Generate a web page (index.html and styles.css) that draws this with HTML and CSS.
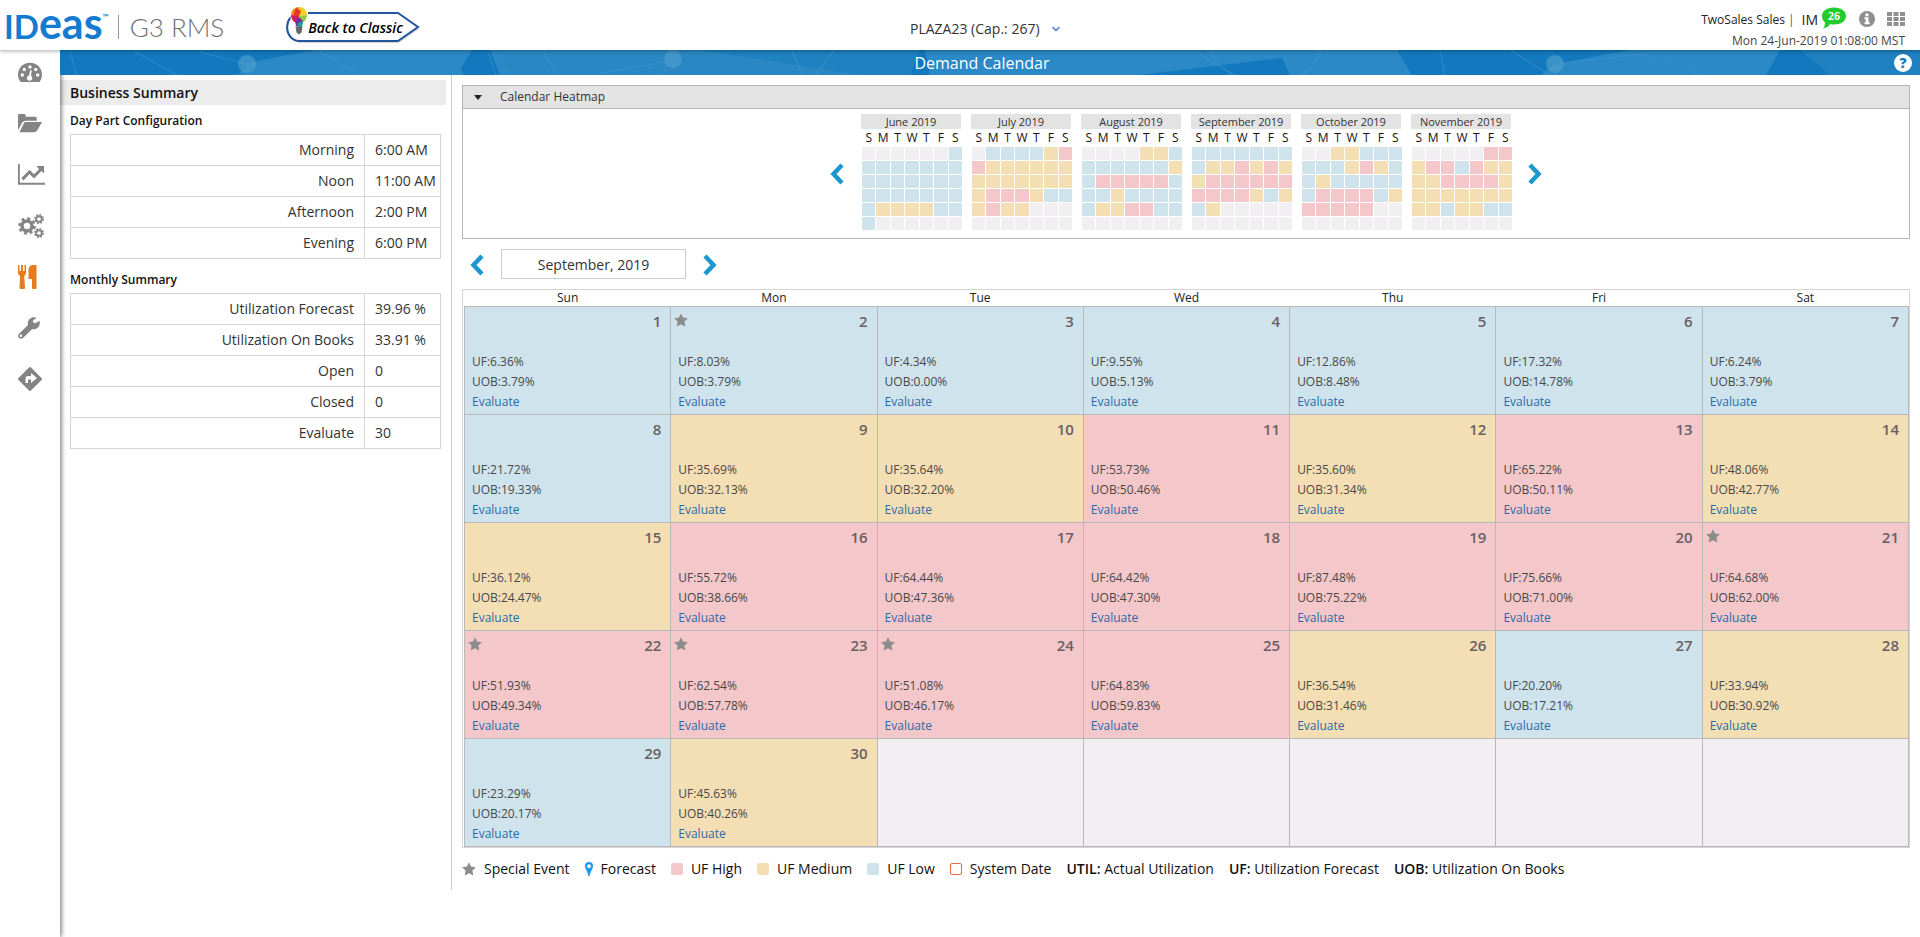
FILE: index.html
```html
<!DOCTYPE html>
<html lang="en">
<head>
<meta charset="utf-8">
<title>Demand Calendar</title>
<link rel="stylesheet" href="styles.css">
<script src="app.js" defer></script>
</head>
<body>
<svg class="defs" aria-hidden="true">
  <symbol id="star" viewBox="0 0 14 14"><path d="M7 .3 9 4.500l4.900.7-3.500 3.400.9 4.900L7 11.200l-4.300 2.300.9-4.900L.1 5.200 5 4.500z"/></symbol>
  <symbol id="prev" viewBox="0 0 14 22"><path d="M12 2 3.500 11 12 20" fill="none" stroke="currentColor" stroke-width="4.500"/></symbol>
  <symbol id="next" viewBox="0 0 14 22"><path d="M2 2 10.500 11 2 20" fill="none" stroke="currentColor" stroke-width="4.500"/></symbol>
</svg>
<header class="top">
  <div class="brand">
    <span class="logo">ID<span class="logo-e">eas</span><span class="tm">™</span></span>
    <span class="product">G3 RMS</span>
    <button class="classic" type="button">
      <svg class="classic-shape" viewBox="0 0 140 40" aria-hidden="true">
        <path d="M16 5h98l20 14-20 14H15C-1 32-1 6 16 5z" fill="#bbb" transform="translate(1 2)" opacity=".6"/>
        <path d="M16 5h98l20 14-20 14H15C-1 32-1 6 16 5z" fill="#fff" stroke="#23559b" stroke-width="2"/>
        <path d="M6 2h18v14l-6 14h-7L7 16z" fill="#fff"/>
        <path d="M15-1a8 8 0 0 0-8 8l8 1z" fill="#f28a1c"/><path d="M15-1a8 8 0 0 1 8 8l-8 1z" fill="#f2d21c"/>
        <path d="M7 7l8 1-2 7C9 14 7 11 7 7z" fill="#d81b60"/><path d="M23 7l-8 1 1 7c4 0 7-4 7-8z" fill="#9acb3c"/>
        <path d="M12 0l5 3-2 5-6 0z" fill="#e5342b"/><path d="M11 13l4-4 4 4-1 5h-6z" fill="#7b2b9b"/><path d="M14 15l5-2-1 6h-5z" fill="#17a398"/>
        <path d="M11.500 18.500h7l-1 6-2.500 2-2.500-2z" fill="#666"/>
      </svg>
      <span class="classic-text">Back to Classic</span>
    </button>
  </div>
  <div class="property">
    <select aria-label="Property"><option>PLAZA23 (Cap.: 267)</option></select>
    <svg width="8" height="6" viewBox="0 0 8 6" aria-hidden="true"><path d="M.5 1 4 4.500 7.500 1" fill="none" stroke="#3f74d1" stroke-width="1.300"/></svg>
  </div>
  <div class="account">
    <div class="user">
      <span>TwoSales Sales</span><span class="bar">|</span><span class="im">IM</span>
      <span class="bubble"><svg viewBox="0 0 26 22" aria-hidden="true"><path d="M13 .5c7 0 12 3.500 12 8.500s-5 8.500-12 8.500c-2 0-3 0-4-.4C8 19.500 5 21 2 21.500c1.500-1.500 2-4 2-6C2 14 1 11.500 1 9 1 4 6 .5 13 .5z" fill="#22cc2c"/></svg><b>26</b></span>
      <svg class="info" viewBox="0 0 16 16" aria-hidden="true"><circle cx="8" cy="8" r="8" fill="#8f8f8f"/><path d="M6.500 2.500h3v2.700h-3zM5.500 6.300h4v5h1.200v2H5.500v-2h1.200V8.300H5.500z" fill="#fff"/></svg>
      <svg class="apps" viewBox="0 0 18 14" aria-hidden="true"><path d="M0 0h5v4H0zM6.500 0h5v4h-5zM13 0h5v4h-5zM0 5h5v4H0zM6.500 5h5v4h-5zM13 5h5v4h-5zM0 10h5v4H0zM6.500 10h5v4h-5zM13 10h5v4h-5z" fill="#8f8f8f"/></svg>
    </div>
    <div class="clock">Mon 24-Jun-2019 01:08:00 MST</div>
  </div>
</header>
<div class="shell">
  <nav class="rail" aria-label="Main">
    <a href="#" aria-label="Dashboard"><svg viewBox="0 0 24 24"><path d="M2.500 21A12 12 0 1 1 21.500 21z"/><g fill="#fff"><circle cx="4.300" cy="14" r="1.700"/><circle cx="6.300" cy="8.500" r="1.700"/><circle cx="12" cy="6" r="1.700"/><circle cx="17.700" cy="8.500" r="1.700"/><circle cx="19.700" cy="14" r="1.700"/><path d="M12.300 9l1.400.2-.7 5.600a2.700 2.700 0 1 1-2-.3z"/></g></svg></a>
    <a href="#" aria-label="Files"><svg viewBox="0 0 25 25"><path d="M0 19V3.500Q0 2 1.500 2h5Q8 2 8 3.500V5h10q1.500 0 1.500 1.500V9H8Q6 9 4.500 11z"/><path d="M8 10.500h17l-5 8.700q-1 1.800-3 1.800H1.500L6 12q.7-1.500 2-1.500z"/></svg></a>
    <a href="#" aria-label="Reports"><svg class="wide" viewBox="0 0 27 24"><path d="M0 1h1.800v18.800H27v2H0z"/><path d="M18.500 3H26v7.500l-2.500-2.500-7.500 7.500-4.500-4.500-6 6.500-2.200-2.300 8.200-8.500 4.500 4.500 5-5z"/></svg></a>
    <a href="#" aria-label="Settings"><svg class="wide" viewBox="0 0 27 24"><g fill="none" stroke="currentColor"><circle cx="9" cy="12" r="5" stroke-width="3.500"/><circle cx="9" cy="12" r="7.500" stroke-width="2.600" stroke-dasharray="3 2.890"/><circle cx="21" cy="5" r="2.800" stroke-width="1.900"/><circle cx="21" cy="5" r="4.200" stroke-width="1.600" stroke-dasharray="1.800 1.500"/><circle cx="21" cy="19" r="2.800" stroke-width="1.900"/><circle cx="21" cy="19" r="4.200" stroke-width="1.600" stroke-dasharray="1.800 1.500"/></g></svg></a>
    <a href="#" class="on" aria-label="Function Space" aria-current="page"><svg class="tall" viewBox="0 0 19 24"><path d="M0 0h1.500v6h1.500V0h2v6h1.500V0H8v8q0 2-1.800 3L7 23q0 1-1 1H2.500q-1 0-1-1l.6-12Q0 10 0 8zM18.500 0v23q0 1-1 1H15q-1 0-1-1v-9h-3.500V5q0-5 5-5z"/></svg></a>
    <a href="#" aria-label="Tools"><svg viewBox="0 0 24 24"><path d="M21.500 4.800 17.500 7.200 15 6.200V4.500L18.700 1.800C14 0 9 3 10 9L.9 18Q-.7 20 1 21.800t4 .2l9-8.800c4 .8 9-2.500 7.500-8.400zM3 18.500a1.200 1.200 0 1 1 0 2.400 1.200 1.200 0 0 1 0-2.400z" fill-rule="evenodd"/></svg></a>
    <a href="#" aria-label="Directions"><svg viewBox="0 0 24 24"><path d="M11 .5q1-1 2 0l10.500 10.500q1 1 0 2L13 23.500q-1 1-2 0L.5 13q-1-1 0-2z"/><path d="M13 6l6 5-6 5v-3.500h-3V16H7.500v-4.500q0-2.500 2.500-2.500h3z" fill="#fff"/></svg></a>
  </nav>
  <div class="page">
    <div class="banner">
      <svg class="banner-art" viewBox="0 0 1860 25" preserveAspectRatio="none" aria-hidden="true">
        <path d="M187 14 260 0h152l-15 25H178zM430 0h210l-20 25H440zM370 25l22-20 12 20zM640 0l160 25H480L500 0zM865 0h420L1080 25H870zM1218 0h114l-22 25h-80zM1332 0h5l15 25h-42zM1495 14 1570 0h150l-14 25h-225z" fill="#3590c9" opacity=".7"/>
        <path d="M1740 0h120v25h-90zM436 0h424l-10 25H450z" fill="#2a87c3" opacity=".6"/>
        <g fill="none" stroke="#4b9bd0" stroke-width="1.200" opacity=".45"><path d="M75 2l42 23M140 2l46 12 70-14 45 25M10 0l6 25M428 2l8 23M484 2l12 23M540 23l70-12-8 14M732 0l10 25M775 0l-20 25M1140 5l35 20M1380 0l5 25M1450 0l40 25M1499 14l80-10 60 20"/><path d="M1150 0q8 17 22 25M1261 0q-4 16-20 25"/></g>
        <g fill="#4c9bcc" opacity=".7"><circle cx="187" cy="14" r="9"/><circle cx="613" cy="9" r="9"/><circle cx="1495" cy="14" r="9"/></g>
      </svg>
      <h1>Demand Calendar</h1>
      <button class="help" type="button" aria-label="Help">?</button>
    </div>
    <div class="content">
      <aside class="summary">
        <h2>Business Summary</h2>
        <h3>Day Part Configuration</h3>
        <table>
          <tr><th scope="row">Morning</th><td>6:00 AM</td></tr>
          <tr><th scope="row">Noon</th><td>11:00 AM</td></tr>
          <tr><th scope="row">Afternoon</th><td>2:00 PM</td></tr>
          <tr><th scope="row">Evening</th><td>6:00 PM</td></tr>
        </table>
        <h3>Monthly Summary</h3>
        <table>
          <tr><th scope="row">Utilization Forecast</th><td>39.96 %</td></tr>
          <tr><th scope="row">Utilization On Books</th><td>33.91 %</td></tr>
          <tr><th scope="row">Open</th><td>0</td></tr>
          <tr><th scope="row">Closed</th><td>0</td></tr>
          <tr><th scope="row">Evaluate</th><td>30</td></tr>
        </table>
      </aside>
      <main class="main">
        <section class="heatmap">
          <button class="heatmap-head" type="button" aria-expanded="true"><span class="caret"></span>Calendar Heatmap</button>
          <div class="heatmap-body">
            <button class="arrow" type="button" aria-label="Earlier months"><svg><use href="#prev"/></svg></button>
            <div class="months" id="months"></div>
            <button class="arrow" type="button" aria-label="Later months"><svg><use href="#next"/></svg></button>
          </div>
        </section>
        <div class="picker">
          <button class="arrow" type="button" aria-label="Previous month"><svg><use href="#prev"/></svg></button>
          <input type="text" value="September, 2019" aria-label="Month">
          <button class="arrow" type="button" aria-label="Next month"><svg><use href="#next"/></svg></button>
        </div>
        <div class="calendar">
          <table>
            <thead><tr><th>Sun</th><th>Mon</th><th>Tue</th><th>Wed</th><th>Thu</th><th>Fri</th><th>Sat</th></tr></thead>
            <tbody id="days"></tbody>
          </table>
        </div>
        <div class="legend">
          <span class="key"><svg class="star"><use href="#star"/></svg>Special Event</span>
          <span class="key"><svg width="8" height="14" viewBox="0 0 8 14"><path d="M4 0a4 4 0 0 1 4 4c0 3-2.600 5-3.300 10H3.300C2.600 9 0 7 0 4a4 4 0 0 1 4-4zm0 2.300a1.900 1.900 0 1 0 0 3.800 1.900 1.900 0 0 0 0-3.800z" fill="#1a9cf0"/></svg>Forecast</span>
          <span class="key"><i class="chip high"></i>UF High</span>
          <span class="key"><i class="chip medium"></i>UF Medium</span>
          <span class="key"><i class="chip low"></i>UF Low</span>
          <span class="key"><i class="chip today"></i>System Date</span>
          <span><b>UTIL:</b> Actual Utilization</span>
          <span><b>UF:</b> Utilization Forecast</span>
          <span><b>UOB:</b> Utilization On Books</span>
        </div>
      </main>
    </div>
  </div>
</div>
</body>
</html>
```
FILE: styles.css
```css
* { box-sizing: border-box; }
body {
  margin: 0; min-height: 100vh; display: flex; flex-direction: column;
  font: 14px/20px "Open Sans", "Noto Sans", sans-serif; color: #333; background: #fff;
}
button, input, select { font: inherit; color: inherit; }
button { background: none; border: 0; padding: 0; cursor: pointer; }
.defs { display: none; }

.top {
  display: grid; grid-template-columns: 1fr auto 1fr; height: 50px;
  background: #fff; box-shadow: 0 1px 4px rgba(0,0,0,.35); z-index: 1;
}
.brand { display: flex; align-items: center; padding-left: 4px; }
.logo { font: 700 33px/46px Lato, sans-serif; color: #147bd1; display: flex; align-items: baseline; padding-bottom: 4px; }
.logo-e { font-size: 43px; }
.tm { font-size: 8px; line-height: 10px; align-self: flex-start; padding-top: 12px; }
.product {
  font: 300 26px/24px Lato, sans-serif; color: #6f6f6f;
  border-left: 1px solid #999; margin-left: 9px; padding-left: 11px;
}
.classic { position: relative; width: 140px; height: 40px; margin: 2px 0 0 60px; }
.classic-shape { position: absolute; inset: 0; width: 100%; height: 100%; overflow: visible; }
.classic-text {
  position: relative; display: block; padding-left: 24px; text-align: left;
  font: italic 600 14px/36px "Open Sans", sans-serif; color: #000; white-space: nowrap;
}
.property { display: flex; align-items: center; gap: 12px; padding: 4px 0 0 50px; }
.property select { appearance: none; border: 0; background: none; padding: 0; font-size: 14px; }
.account { padding: 7px 15px 0 0; text-align: right; font-size: 12px; }
.user { display: flex; justify-content: flex-end; height: 26px; align-items: center; color: #222; }
.bar { margin: 0 7px 0 3px; color: #555; }
.im { font-size: 14px; }
.bubble { position: relative; width: 26px; height: 22px; margin: 0 12px 4px 3px; }
.bubble svg { position: absolute; inset: 0; width: 100%; height: 100%; }
.bubble b { position: relative; display: block; text-align: center; color: #fff; font: 700 12px/18px "Liberation Serif", serif; }
.info { width: 16px; height: 16px; margin: 0 12px 2px 0; }
.apps { width: 18px; height: 14px; margin-bottom: 2px; }
.clock { line-height: 16px; color: #444; }

.shell { flex: 1; display: flex; }
.rail {
  width: 60px; flex: none; display: flex; flex-direction: column; padding-top: 11px;
  box-shadow: 1px 0 5px rgba(0,0,0,.6); z-index: 0; background: #fff;
}
.rail a { height: 51px; padding-left: 18px; color: #848484; }
.rail svg { display: block; width: 24px; height: 24px; fill: currentColor; }
.rail .wide { width: 27px; }
.rail .tall { width: 19px; }
.rail .on { color: #e57d20; }

.page { flex: 1; min-width: 0; }
.banner { position: relative; display: flex; align-items: center; height: 25px; padding: 0 8px 0 10px; background: #1279bf; overflow: hidden; }
.banner-art { position: absolute; inset: 0; width: 100%; height: 100%; }
.banner h1 { position: relative; flex: 1; margin: 0; text-align: center; font-size: 16px; line-height: 26px; font-weight: 400; color: #fff; }
.help { position: relative; width: 18px; height: 18px; border-radius: 50%; background: #fff; color: #1279bf; font-weight: 800; line-height: 18px; }

.content { display: flex; }
.summary { width: 392px; flex: none; min-height: 815px; border-right: 1px solid #ccc; padding: 5px 5px 0 0; }
.summary h2 { margin: 0; padding-left: 10px; background: #ececec; font-size: 14px; line-height: 25px; font-weight: 600; color: #111; }
.summary h3 { margin: 0 0 4px 10px; padding-top: 6px; font-size: 12px; line-height: 19px; font-weight: 600; color: #111; }
.summary table { margin: 0 5px 5px 10px; width: 371px; border-collapse: collapse; }
.summary th, .summary td { border: 1px solid #d5d5d5; height: 31px; padding: 0 10px; font-weight: 400; line-height: 20px; }
.summary th { text-align: right; }
.summary td { width: 76px; padding-right: 0; white-space: nowrap; }

.main { flex: 1; min-width: 0; padding: 10px 10px 0; }
.heatmap { border: 1px solid #b5b5b5; }
.heatmap-head { display: flex; align-items: center; width: 100%; height: 23px; padding-left: 11px; background: #e3e3e3; border-bottom: 1px solid #b5b5b5; font-size: 12px; }
.caret { border: 4px solid transparent; border-top: 5px solid #222; border-bottom: 0; margin-right: 18px; }
.heatmap-body { display: flex; justify-content: center; align-items: center; gap: 17px; padding: 5px 0 7px; }
.arrow { color: #1b98cf; line-height: 0; padding-top: 2px; }
.arrow svg { width: 14px; height: 22px; }
.months { display: flex; gap: 10px; }
.month { width: 100px; font-size: 11px; }
.month table { border-collapse: separate; border-spacing: 1px; table-layout: fixed; width: 102px; }
.month caption { background: #e3e3e3; width: 100px; line-height: 15px; }
.month th { height: 16px; padding: 0; font-size: 12px; line-height: 16px; font-weight: 400; color: #111; }
.month td { height: 13px; padding: 0; }
.low { background: #cee3ec; }
.medium { background: #f4deb4; }
.high { background: #f4c7ca; }
.none { background: #f1eff2; }

.picker { display: flex; align-items: center; gap: 17px; padding: 10px 0 10px 8px; }
.picker input { width: 185px; height: 30px; padding: 0; border: 1px solid #ccc; text-align: center; }

.calendar { border: 1px solid #d5d5d5; padding-left: 1px; }
.calendar table { width: 100%; table-layout: fixed; border-collapse: collapse; }
.calendar th { height: 16px; padding: 0; font-size: 12px; line-height: 16px; font-weight: 400; color: #222; }
.calendar td { position: relative; height: 108px; border: 1px solid #b8b8b8; padding: 4px 9px 2px 7px; vertical-align: top; font-size: 12px; line-height: 20px; color: #484848; }
.date { display: block; margin-bottom: 21px; text-align: right; font-size: 15px; font-weight: 600; color: #6a6063; }
.calendar a { color: #2a6ba8; text-decoration: none; }
.star { width: 14px; height: 14px; fill: #8c8c8c; }
.calendar .star { position: absolute; left: 3px; top: 6px; }

.legend { display: flex; gap: 15px; padding: 11px 0 0; color: #111; }
.key { display: flex; align-items: center; gap: 8px; }
.legend b { font-weight: 600; }
.chip { width: 12px; height: 12px; border-radius: 2px; }
.today { border: 1px solid #ee6a3c; }
```
FILE: app.js
```js
const LEVELS = { n: 'none', l: 'low', m: 'medium', h: 'high' };

const MONTHS = [
  ['June 2019', 'nnnnnnl lllllll lllllll lllllll lmmmmll lnnnnnn'],
  ['July 2019', 'nllllmh hmmmmmm mmmmmmm mhhhmll mhmmnnn nnnnnnn'],
  ['August 2019', 'nnnnmml llllllm lhhhhhl llmllll lmmhhll nnnnnnn'],
  ['September 2019', 'lllllll lmmhmhm mhhhhhh hhhhmlm lmnnnnn nnnnnnn'],
  ['October 2019', 'nnmmlll lllmhml lmlllll lhhhhlm hhhhhnn nnnnnnn'],
  ['November 2019', 'nnnnnhh mhhlhmm mmhhhhm mmmmmmm mmlmmll nnnnnnn'],
];

document.getElementById('months').innerHTML = MONTHS.map(([name, weeks]) => `
  <div class="month"><table><caption>${name}</caption>
  <thead><tr>${[...'SMTWTFS'].map(d => `<th>${d}</th>`).join('')}</tr></thead>
  <tbody>${weeks.split(' ').map(w => `<tr>${[...w].map(c => `<td class="${LEVELS[c]}"></td>`).join('')}</tr>`).join('')}</tbody>
  </table></div>`).join('');

// utilization forecast, utilization on books, one pair per day of September
const DAYS = [
  ['6.36', '3.79'], ['8.03', '3.79'], ['4.34', '0.00'], ['9.55', '5.13'], ['12.86', '8.48'], ['17.32', '14.78'], ['6.24', '3.79'],
  ['21.72', '19.33'], ['35.69', '32.13'], ['35.64', '32.20'], ['53.73', '50.46'], ['35.60', '31.34'], ['65.22', '50.11'], ['48.06', '42.77'],
  ['36.12', '24.47'], ['55.72', '38.66'], ['64.44', '47.36'], ['64.42', '47.30'], ['87.48', '75.22'], ['75.66', '71.00'], ['64.68', '62.00'],
  ['51.93', '49.34'], ['62.54', '57.78'], ['51.08', '46.17'], ['64.83', '59.83'], ['36.54', '31.46'], ['20.20', '17.21'], ['33.94', '30.92'],
  ['23.29', '20.17'], ['45.63', '40.26'],
];
const EVENTS = [2, 21, 22, 23, 24];
const STAR = '<svg class="star" role="img" aria-label="Special event"><use href="#star"/></svg>';

document.getElementById('days').innerHTML = MONTHS[3][1].split(' ').slice(0, 5).map((week, row) =>
  `<tr>${[...week].map((level, col) => {
    const day = row * 7 + col + 1;
    const values = DAYS[day - 1];
    if (!values) return '<td class="none"></td>';
    return `<td class="${LEVELS[level]}">${EVENTS.includes(day) ? STAR : ''}<span class="date">${day}</span>
      UF:${values[0]}%<br>UOB:${values[1]}%<br><a href="#">Evaluate</a></td>`;
  }).join('')}</tr>`).join('');
```
